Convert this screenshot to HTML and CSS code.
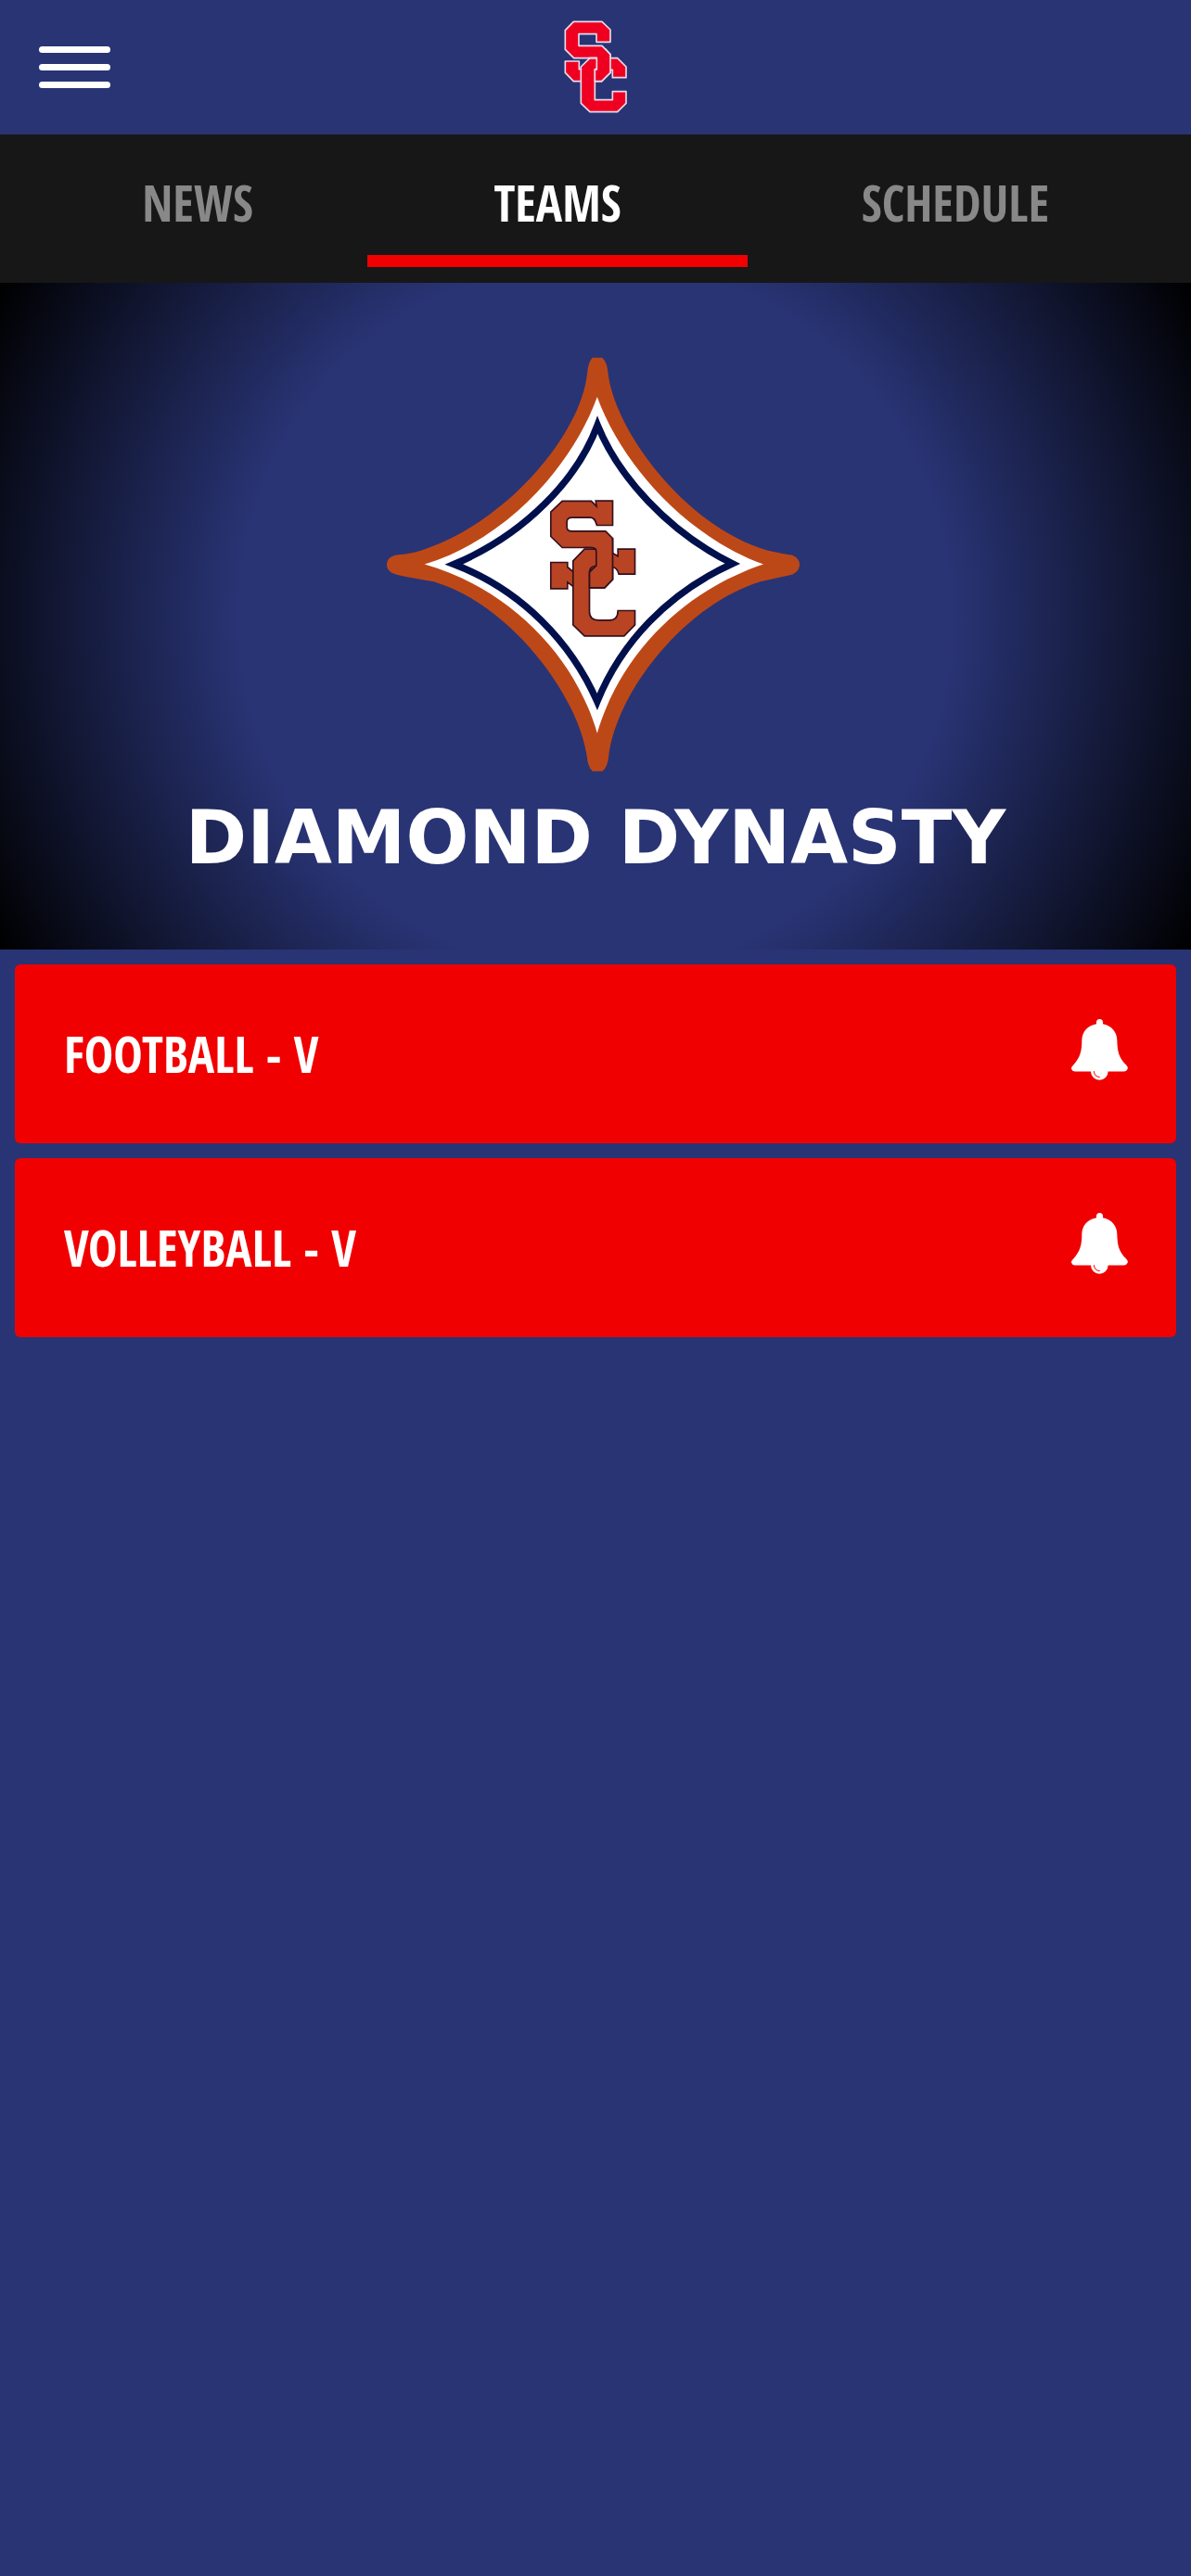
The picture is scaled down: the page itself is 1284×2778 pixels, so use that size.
FILE: index.html
```html
<!DOCTYPE html>
<html lang="en">
<head>
<meta charset="utf-8">
<meta name="viewport" content="width=device-width, initial-scale=1">
<title>Teams</title>
<link rel="stylesheet" href="styles.css">
</head>
<body>
<header class="topbar">
  <button class="menu" type="button" aria-label="Menu">
    <span class="menu-bar"></span><span class="menu-bar"></span><span class="menu-bar"></span>
  </button>
  <svg class="logo" viewBox="55 36 204 303" role="img" aria-label="SC">
    <g fill="#f00020" stroke="#e4dcec" stroke-width="5" stroke-linejoin="round">
      <path d="M86 40H178L205 66V106H160V80H103V118H178L205 146V205L177 233H86L59 205V168H104V194H161V158H87L59 130V68Z"/>
      <path d="M139 158H228L256 186V221H212V196H155V293H212V266H256V304L228 332H139L110 304V186Z"/>
      <path d="M163 160V197H153V231H177L205 203V146L190 131H163Z" stroke="none"/>
      <path d="M135 158H161V194H155V233H177L205 205V146L188 128" fill="none"/>
    </g>
  </svg>
</header>
<nav class="tabs">
  <a class="tab" href="#news">NEWS</a>
  <a class="tab tab-active" href="#teams" aria-current="page">TEAMS</a>
  <a class="tab" href="#schedule">SCHEDULE</a>
</nav>
<main>
  <section class="banner">
    <svg class="diamond" viewBox="50 46 1358 1340" role="img" aria-label="SC diamond">
      <path fill="#bd4817" d="M718 48H749Q766 64 768 98C790 285 1018 595 1285 672Q1340 684 1362 686Q1387 697 1387 717Q1387 738 1364 749Q1330 757 1260 772C1015 848 795 1130 770 1335Q768 1370 750 1385H718Q702 1370 700 1338C670 1135 450 845 205 772Q140 762 95 752Q53 745 53 717Q53 690 90 685Q135 684 190 662C440 572 680 300 701 98Q704 60 718 48Z"/>
      <path fill="#fff" d="M733 175C812 394 1022 626 1270 716C1020 800 810 1000 733 1262C660 1010 448 794 175 716C444 634 654 394 733 175Z"/>
      <path fill="none" stroke="#00104c" stroke-width="22" stroke-miterlimit="8" d="M734 266C800 430 960 610 1170 714C960 810 810 970 733 1160C650 970 490 800 270 716C500 620 670 440 734 266Z"/>
      <g fill="#b84424" stroke="#35101c" stroke-width="5" stroke-linejoin="miter">
        <path d="M620 512H714L731 529L728 511H783V590H732C728 576 724 565 712 565H652Q635 565 635 580V595Q635 609 652 609H760L783 632V765L757 792H690L658 790L637 774V795H583V710H637V725L657 742L708 738L730 720V676Q730 662 712 662H620L583 626V547Z"/>
        <path d="M692 667H725L783 680L800 690V667H855V748H803C798 730 791 724 770 722H726Q708 724 708 742V870Q708 897 738 897H772Q800 897 800 866H855V912L820 948H692L655 912V705Z"/>
        <path stroke="none" d="M731 640H781V765L757 790H710V742L731 720Z"/>
        <path fill="none" d="M690 662H712Q730 662 730 676V720L708 742V792H757L783 765V632"/>
      </g>
    </svg>
    <h1 class="banner-title">DIAMOND DYNASTY</h1>
  </section>
  <ul class="teams">
    <li class="team">
      <a class="team-name" href="#football">FOOTBALL - V</a>
      <button class="bell" type="button" aria-label="Football alerts">
        <svg class="bell-icon" viewBox="0 0 183 224" aria-hidden="true"><use href="#bell"/></svg>
      </button>
    </li>
    <li class="team">
      <a class="team-name" href="#volleyball">VOLLEYBALL - V</a>
      <button class="bell" type="button" aria-label="Volleyball alerts">
        <svg class="bell-icon" viewBox="0 0 183 224" aria-hidden="true">
          <g id="bell">
            <path fill="#fff" d="M81 15V10A10 10 0 0 1 102 10V15C133 22 147 42 148 68C149 105 153 124 178 149Q184 155 182 161Q179 169 170 169H119A28 28 0 0 1 63 169H12Q3 169 0 161Q-1 155 6 149C30 121 34 102 34 66C36 40 51 21 81 15Z"/>
            <path fill="none" stroke="#f00000" stroke-width="3" d="M73 168Q75 187 92 187"/>
          </g>
        </svg>
      </button>
    </li>
  </ul>
</main>
</body>
</html>
```
FILE: styles.css
```css
* { box-sizing: border-box; }

body {
  margin: 0;
  min-height: 100vh;
  background: #293475;
  color: #fff;
  font-family: "Open Sans Condensed", "Open Sans", sans-serif;
  font-size: 53px;
  font-weight: 700;
}

a { color: inherit; text-decoration: none; }

button {
  padding: 0;
  border: 0;
  background: none;
  color: inherit;
}

.topbar {
  display: grid;
  grid-template-columns: 1fr auto 1fr;
  align-items: center;
  padding: 22px 42px;
}

.menu {
  display: flex;
  flex-direction: column;
  gap: 12px;
  width: 77px;
}

.menu-bar {
  height: 7px;
  border-radius: 4px;
  background: #fff;
}

.logo { display: block; width: 68px; height: 101px; }

.tabs {
  display: grid;
  grid-template-columns: 366fr 410fr 448fr;
  padding: 16px 30px 17px;
  background: #171717;
  color: #888;
}

.tab {
  padding: 22px 0 20px;
  border-bottom: 13px solid transparent;
  line-height: 72px;
  text-align: center;
}

.tab-active { border-color: #f00000; color: #fff; }

.banner {
  display: flex;
  flex-direction: column;
  align-items: center;
  gap: 24px;
  padding: 80px 16px 72px;
  background: radial-gradient(circle farthest-corner, #293475 52%, #000 100%);
}

.diamond { display: block; width: 453px; height: 447px; }

.banner-title {
  margin: 0;
  font-family: "DejaVu Sans", sans-serif;
  font-size: 80px;
  font-weight: 700;
  line-height: 96px;
  text-align: center;
}

.teams {
  display: grid;
  gap: 16px;
  margin: 0;
  padding: 16px;
  list-style: none;
}

.team {
  display: flex;
  align-items: center;
  justify-content: space-between;
  padding: 59px 52px 59px 53px;
  border-radius: 6px;
  background: #f00000;
}

.team-name { line-height: 75px; }

.bell-icon { display: block; width: 61px; height: 75px; }
```
